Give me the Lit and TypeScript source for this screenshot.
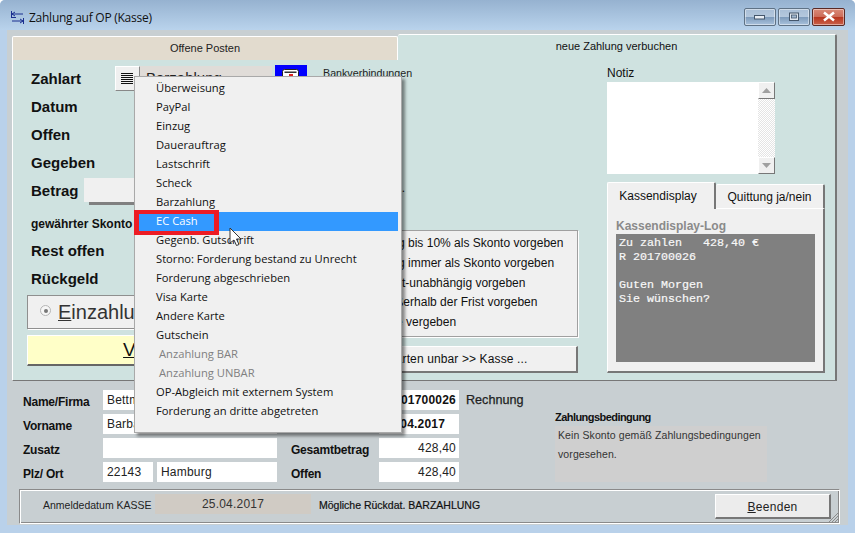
import { LitElement, html, css, svg } from "lit";
import { customElement } from "lit/decorators.js";

const MENU = [
  ["Überweisung"], ["PayPal"], ["Einzug"], ["Dauerauftrag"], ["Lastschrift"], ["Scheck"], ["Barzahlung"],
  ["EC Cash", "sel"], ["Gegenb. Gutschrift"], ["Storno: Forderung bestand zu Unrecht"], ["Forderung abgeschrieben"],
  ["Visa Karte"], ["Andere Karte"], ["Gutschein"], ["Anzahlung BAR", "dis"], ["Anzahlung UNBAR", "dis"],
  ["OP-Abgleich mit externem System"], ["Forderung an dritte abgetreten"],
];

const OPTIONS = [
  "Restbetrag bis 10% als Skonto vorgeben",
  "Restbetrag immer als Skonto vorgeben",
  "Skonto zeit-unabhängig vorgeben",
  "Skonti außerhalb der Frist vorgeben",
  "Skonto nie vergeben",
];

@customElement("app-root")
export class AppRoot extends LitElement {
  static styles = css`
    :host { display: block; width: 855px; height: 533px; overflow: hidden; }
    * { box-sizing: border-box; }
    .win { position: relative; width: 855px; height: 533px; overflow: hidden; background: #b9d1ea;
      border-radius: 5px 5px 0 0; font-family: "Liberation Sans", Arial, sans-serif; font-size: 12px; color: #000;
      display: flex; flex-direction: column; }
    .title { height: 30px; flex: none; display: flex; align-items: center; padding: 9px 10px 4px 11px;
      background: linear-gradient(#96b2d0, #b9d3ec); }
    .title svg.ic { margin-right: 5px; }
    .title .t { flex: 1; font-family: "Open Sans", sans-serif; font-size: 12px; color: #111; letter-spacing: -0.26px; }
    .caps { display: flex; gap: 2px; margin-top: -2px; }
    .cap { width: 32px; height: 18px; border: 1px solid #5f7285; border-radius: 2px; display: flex; align-items: center; justify-content: center;
      background: linear-gradient(#a8bed6 0, #b4c8dd 50%, #7e9bbb 52%, #a9c2dc 100%); box-shadow: inset 0 0 0 1px rgba(255,255,255,.45); }
    .cap.close { width: 33px; border-color: #5a2a25; background: linear-gradient(#d98a78 0, #cc6b58 50%, #b8361f 52%, #c9614a 100%); }
    .client { margin: 0 7px 8px; height: 495px; background: #c8cfd2; padding: 4px 0 0 5px; display: flex; flex-direction: column; }
    .tabs { display: flex; height: 26px; align-items: flex-end; }
    .tab1 { width: 386px; height: 24px; background: #e2dbce; border: 1px solid #fff; border-bottom: 0; border-radius: 2px 2px 0 0;
      text-align: center; font-size: 11px; line-height: 22px; color: #222; }
    .tab2 { width: 439px; height: 26px; background: #cfe2e0; border-top: 1px solid #fff; border-right: 2px solid #777; text-align: center;
      font-size: 11px; line-height: 22px; color: #111; border-radius: 2px 2px 0 0; }
    .panel { width: 825px; height: 321px; background: #cfe2e0; border-left: 1px solid #fff; border-right: 2px solid #777; border-bottom: 1px solid #777;
      padding: 5px 0 0 14px; display: flex; flex: none; }

    .left { width: 313px; flex: none; display: flex; flex-direction: column; }
    .row { height: 28px; padding: 0 0 2px 4px; display: flex; align-items: center; font-weight: bold; font-size: 15px; color: #111; flex: none; }
    .row .lbl { width: 84px; flex: none; }
    .skonto { height: 32px; padding: 5px 0 0 4px; font-size: 12px; font-weight: bold; display: flex; align-items: center; flex: none; color: #111; }
    .listbtn { width: 25px; height: 25px; flex: none; background: #f0f0f0; border: 1px solid; border-color: #fff #888 #888 #fff; display: flex; align-items: center; justify-content: center; padding-right: 1px; }
    .select { width: 132px; height: 25px; flex: none; background: #e0dcd8; font-size: 15px; font-weight: normal; padding: 3px 0 0 6px; color: #222; }
    .cardbtn { width: 32px; height: 26px; flex: none; margin-left: 3px; background: #0000ff; display: flex; justify-content: center; padding-top: 4px; }
    .bank { flex: none; margin: -11px 0 0 16px; font-size: 10.7px; font-weight: normal; color: #222; }
    .betrag { width: 115px; height: 24px; margin-left: 5px; background: #f0f0f0; box-shadow: 4px 4px 0 -1px #808080; flex: none; }
    .einz { height: 34px; margin-top: 2px; background: #f0f0f0; border: 1px solid #8f8f8f; box-shadow: 1px 1px 0 #fff; display: flex; align-items: center; padding-left: 12px; font-size: 20px; color: #333; flex: none; }
    .einz u { text-decoration-thickness: 1px; }
    .radio { width: 11px; height: 11px; border-radius: 50%; border: 1px solid #b5b5b5; background: #f6f6f6; margin: -3px 7px 0 0; display: flex; align-items: center; justify-content: center; }
    .radio i { width: 4px; height: 4px; border-radius: 50%; background: #777; display: block; }
    .verb { height: 31px; margin-top: 6px; background: #ffffc8; border-top: 1px solid #fff; border-left: 1px solid #fff; border-right: 2px solid #777; border-bottom: 2px solid #666;
      display: flex; align-items: center; justify-content: center; font-size: 19px; color: #111; flex: none; padding-right: 29px; }

    .mid { width: 238px; flex: none; display: flex; flex-direction: column; }
    .midtop { height: 165px; width: 65px; padding-top: 116px; text-align: right; flex: none; white-space: nowrap; color: #111; }
    .opts { height: 107px; background: #f0f0f0; border: 1px solid #a0a0a0; box-shadow: 1px 1px 0 #fff; padding: 3px 0 0 5px; flex: none; }
    .opts div { height: 19.8px; line-height: 19px; white-space: nowrap; color: #111; }
    .payb { height: 27px; margin-top: 9px; background: #f0f0f0; border-top: 1px solid #fff; border-left: 1px solid #fff; border-right: 2px solid #777; border-bottom: 2px solid #777;
      display: flex; align-items: center; justify-content: center; flex: none; padding-right: 2px; font-size: 12px; color: #111; letter-spacing: .12px; }

    .right { width: 218px; margin-left: 29px; flex: none; display: flex; flex-direction: column; }
    .notizl { height: 17px; line-height: 17px; font-size: 12px; color: #111; flex: none; }
    .notiz { width: 168px; height: 92px; background: #fff; display: flex; justify-content: flex-end; flex: none; }
    .sb { width: 17px; height: 92px; display: flex; flex-direction: column; justify-content: space-between;
      background-color: #f4f4f4; background-image: repeating-conic-gradient(#e4e4e4 0 25%, #fff 0 50%); background-size: 2px 2px; }
    .sbb { width: 17px; height: 17px; background: #f0f0f0; border: 1px solid; border-color: #fff #777 #777 #fff; display: flex; align-items: center; justify-content: center; }
    .ktabs { display: flex; margin-top: 8px; height: 27px; align-items: flex-end; flex: none; }
    .kt1 { width: 109px; height: 27px; background: #f0f0f0; border-top: 1px solid #fff; border-left: 1px solid #fff; border-right: 2px solid #777; text-align: center; line-height: 27px; color: #111; border-radius: 2px 2px 0 0; padding-right: 6px; letter-spacing: .02px; }
    .kt2 { width: 109px; height: 25px; background: #f0f0f0; border-top: 1px solid #fff; border-right: 2px solid #777; border-bottom: 1px solid #fff; text-align: center; line-height: 25px; color: #111; border-radius: 2px 2px 0 0; }
    .kp { height: 164px; background: #f0f0f0; border-left: 1px solid #fff; border-right: 2px solid #777; border-bottom: 2px solid #777; padding: 9px 8px 0 8px; flex: none; }
    .klog { font-weight: bold; color: #8a8a8a; font-size: 12px; height: 16px; line-height: 16px; }
    .kscr { height: 128px; background: #808080; color: #f8f8f8; font-family: "Liberation Mono", monospace; font-size: 11.67px; line-height: 14px; padding: 2px 0 0 3px; white-space: pre; -webkit-text-stroke: .2px #f8f8f8; }

    .bottom { display: grid; grid-template-columns: 80px 174px 14px 88px 80px 7px 89px 212px; grid-template-rows: 20px 20px 20px 20px; row-gap: 4px;
      padding: 9px 0 0 11px; align-items: center; flex: none; height: 108px; }
    .bl { font-weight: bold; font-size: 12px; color: #111; letter-spacing: -0.22px; padding-top: 4px; }
    .f { background: #fff; height: 20px; line-height: 20px; padding-left: 4px; font-size: 12px; color: #222; white-space: nowrap; overflow: hidden; letter-spacing: .2px; }
    .f.r { text-align: right; padding: 0 3px 0 0; }
    .f.b { font-weight: bold; color: #111; }
    .plz { display: flex; gap: 4px; grid-column: 2; }
    .plz .f:first-child { width: 50px; }
    .plz .f:last-child { width: 120px; }
    .rech { font-size: 12.6px; color: #222; margin-top: -1px; -webkit-text-stroke: .25px #222; white-space: nowrap; }
    .zb { grid-column: 8; grid-row: 2 / 5; align-self: stretch; display: flex; flex-direction: column; }
    .zbl { height: 12px; line-height: 7px; font-weight: bold; font-size: 11px; letter-spacing: -.55px; color: #111; }
    .zbb { flex: 1; background: #cfcfcf; padding: 0 0 0 3px; font-size: 10.5px; line-height: 19px; color: #333; letter-spacing: .1px; }

    .status { width: 821px; height: 35px; margin-left: 7px; border: 1px solid; border-color: #8a8a8a #fff #fff #8a8a8a; box-shadow: inset 1px 1px 0 #fff, inset -1px -1px 0 #8a8a8a;
      display: flex; padding: 4px 0 0 23px; position: relative; flex: none; }
    .s1 { width: 112px; flex: none; font-size: 10.5px; line-height: 22px; color: #222; white-space: nowrap; }
    .sdate { width: 156px; height: 20px; background: #d0cbc4; flex: none; text-align: center; font-size: 12px; line-height: 20px; color: #333; letter-spacing: .2px; }
    .s2 { width: 396px; flex: none; margin-left: 8px; font-size: 10.5px; line-height: 22px; color: #111; -webkit-text-stroke: .2px #111; }
    .beenden { width: 116px; height: 25px; flex: none; background: #ececec; border-top: 1px solid #fff; border-left: 1px solid #fff; border-right: 2px solid #777; border-bottom: 2px solid #777; text-align: center; line-height: 24px; color: #222; letter-spacing: .3px; font-size: 12px; }
    .grip { position: absolute; right: 0; bottom: 0; }

    .menu { position: absolute; left: 134px; top: 76px; width: 268px; height: 357px; background: #f0f0f0; border: 1px solid #a9a9a9; padding: 2px 3px;
      box-shadow: 3px 3px 3px rgba(0,0,0,.45); font-family: "Open Sans", sans-serif; font-size: 11.2px; color: #111; }
    .mi { height: 19px; line-height: 18px; padding-left: 18px; white-space: nowrap; }
    .mi.sel { background: #3399ff; color: #fff; }
    .mi.dis { color: #808080; padding-left: 21px; }
    .red { position: absolute; left: 134px; top: 210px; width: 85px; height: 25px; border: solid #ed1c24; border-width: 4px 5px; pointer-events: none; }
    .cursor { position: absolute; left: 229px; top: 227px; }
  `;

  render() {
    return html`
      <div class="win">
        <div class="title">
          <svg class="ic" width="13" height="13" viewBox="0 0 13 13" fill="none" stroke="#1b2f8f" stroke-width="1">
            <path d="M.5 0v6M1 3h11M1 3l3-2M1 3l3 2"/>
            <path d="M12.5 7v6M1 10h11M12 10l-3-2M12 10l-3 2M0 6.5h5"/>
          </svg>
          <div class="t">Zahlung auf OP (Kasse)</div>
          <div class="caps">
            <div class="cap"><svg width="12" height="6"><rect x=".5" y="1.5" width="10" height="3.5" fill="#e8eef5" stroke="#44566b"/></svg></div>
            <div class="cap"><svg width="12" height="10"><rect x="1.5" y="1" width="9" height="7.5" fill="#dfe7ef" stroke="#44566b"/><rect x="3.5" y="3" width="5" height="3" fill="#9fb6ce" stroke="#44566b" stroke-width=".8"/></svg></div>
            <div class="cap close"><svg width="14" height="11"><path d="M2 1.5l10 8M12 1.5l-10 8" stroke="#fff" stroke-width="2.6"/></svg></div>
          </div>
        </div>
        <div class="client">
          <div class="tabs">
            <div class="tab1">Offene Posten</div>
            <div class="tab2">neue Zahlung verbuchen</div>
          </div>
          <div class="panel">
            <div class="left">
              <div class="row">
                <span class="lbl">Zahlart</span>
                <span class="listbtn"><svg width="12" height="13" stroke="#111"><path d="M0 1.5h12M0 3.5h12M0 5.5h12M0 7.5h12M0 9.5h12M0 11.5h12"/></svg></span>
                <span class="select">Barzahlung</span>
                <span class="cardbtn"><svg width="18" height="14"><rect x=".5" y=".5" width="16" height="12" rx="2" fill="#fff" stroke="#222"/><rect x="2.5" y="2.5" width="12" height="1.5" fill="#333"/><rect x="7" y="5" width="4" height="3" fill="#d22"/></svg></span>
                <span class="bank">Bankverbindungen</span>
              </div>
              <div class="row">Datum</div>
              <div class="row">Offen</div>
              <div class="row">Gegeben</div>
              <div class="row"><span>Betrag</span><span class="betrag"></span></div>
              <div class="skonto">gewährter Skonto</div>
              <div class="row">Rest offen</div>
              <div class="row">Rückgeld</div>
              <div class="einz"><span class="radio"><i></i></span><span><u>E</u>inzahlung</span></div>
              <div class="verb"><span><u>V</u>erbuchen</span></div>
            </div>
            <div class="mid">
              <div class="midtop">Zahlung.</div>
              <div class="opts">${OPTIONS.map((o) => html`<div>${o}</div>`)}</div>
              <div class="payb">Karten unbar &gt;&gt; Kasse ...</div>
            </div>
            <div class="right">
              <div class="notizl">Notiz</div>
              <div class="notiz">
                <div class="sb">
                  <div class="sbb"><svg width="9" height="5"><path d="M4.5 0L9 5H0z" fill="#a0a0a0"/></svg></div>
                  <div class="sbb"><svg width="9" height="5"><path d="M4.5 5L9 0H0z" fill="#a0a0a0"/></svg></div>
                </div>
              </div>
              <div class="ktabs">
                <div class="kt1">Kassendisplay</div>
                <div class="kt2">Quittung ja/nein</div>
              </div>
              <div class="kp">
                <div class="klog">Kassendisplay-Log</div>
                <div class="kscr">Zu zahlen   428,40 €
R 201700026

Guten Morgen
Sie wünschen?</div>
              </div>
            </div>
          </div>
          <div class="bottom">
            <div class="bl">Name/Firma</div>
            <div class="f">Bettmann</div>
            <div></div>
            <div></div>
            <div class="f r b">201700026</div>
            <div></div>
            <div class="rech">Rechnung</div>
            <div></div>

            <div class="bl">Vorname</div>
            <div class="f">Barbara</div>
            <div></div>
            <div></div>
            <div class="f b">25.04.2017</div>
            <div></div>
            <div></div>
            <div class="zb">
              <div class="zbl">Zahlungsbedingung</div>
              <div class="zbb">Kein Skonto gemäß Zahlungsbedingungen<br />vorgesehen.</div>
            </div>

            <div class="bl">Zusatz</div>
            <div class="f"></div>
            <div></div>
            <div class="bl">Gesamtbetrag</div>
            <div class="f r">428,40</div>
            <div></div>
            <div></div>

            <div class="bl">Plz/ Ort</div>
            <div class="plz"><div class="f">22143</div><div class="f">Hamburg</div></div>
            <div></div>
            <div class="bl">Offen</div>
            <div class="f r">428,40</div>
            <div></div>
            <div></div>
          </div>
          <div class="status">
            <div class="s1">Anmeldedatum KASSE</div>
            <div class="sdate">25.04.2017</div>
            <div class="s2">Mögliche Rückdat. BARZAHLUNG</div>
            <div class="beenden"><u>B</u>eenden</div>
            <svg class="grip" width="12" height="12" stroke="#8a8a8a">${svg`<path d="M11 2L2 11M11 5L5 11M11 8L8 11"/>`}</svg>
          </div>
        </div>
        <div class="menu">
          ${MENU.map(([t, c]) => html`<div class="mi ${c || ""}">${t}</div>`)}
        </div>
        <div class="red"></div>
        <svg class="cursor" width="13" height="20" viewBox="0 0 13 20"><path d="M1 1v15l4-3 2.5 5.5 2.5-1L7.5 12H12z" fill="#fff" stroke="#333" stroke-width="1"/></svg>
      </div>
    `;
  }
}
